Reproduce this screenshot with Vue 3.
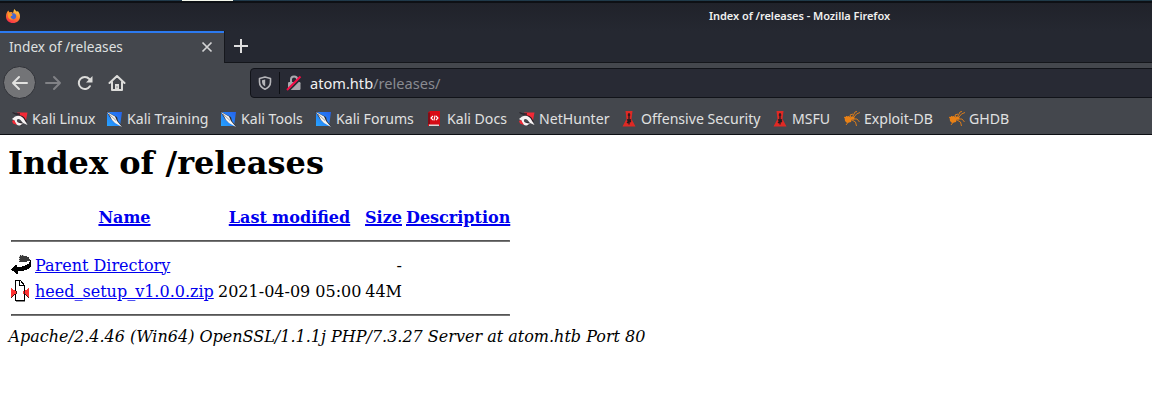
<script setup>
const bookmarks = [
  { label: 'Kali Linux', icon: 'dragon', w: 95 },
  { label: 'Kali Training', icon: 'knife', w: 114 },
  { label: 'Kali Tools', icon: 'knife', w: 95 },
  { label: 'Kali Forums', icon: 'knife', w: 111 },
  { label: 'Kali Docs', icon: 'book', w: 92 },
  { label: 'NetHunter', icon: 'dragon', w: 102 },
  { label: 'Offensive Security', icon: 'offsec', w: 151 },
  { label: 'MSFU', icon: 'offsec', w: 72 },
  { label: 'Exploit-DB', icon: 'bug', w: 105 },
  { label: 'GHDB', icon: 'bug', w: 70 },
]
</script>

<template>
  <div class="window">
    <div class="desktop"><i></i></div>
    <header class="titlebar">
      <svg class="fox" width="16" height="16" viewBox="0 0 16 16">
        <defs>
          <linearGradient id="fx" x1="0.8" y1="0" x2="0.3" y2="1">
            <stop offset="0" stop-color="#ffd84a" /><stop offset=".45" stop-color="#ff8a2a" /><stop offset="1" stop-color="#f52b4b" />
          </linearGradient>
        </defs>
        <path d="M1 8.5C1 6 1.8 4 3.3 2.5L4.3 4.3L6.5 4L8 5L9.2 1L11.5 3.6L13 3.2C14.4 4.8 15 6.5 15 8.5C15 12.4 12 15 8 15S1 12.400 1 8.500Z" fill="url(#fx)" />
        <path d="M5.300 5.700L8 5.200C10 5 11.500 6.500 11.200 8.500C11 10.500 9.500 11.500 7.700 11.200C6 11 5 9.500 5.600 8L7.600 7.500Z" fill="#4668ce" />
        <path d="M3 5.500L5.500 5L7.800 6.900L5.600 8.200C5 9.500 6.300 11 8.300 10.900C6 12.500 3 11 3 8Z" fill="#ff9b27" />
      </svg>
      <span class="window-title">Index of /releases - Mozilla Firefox</span>
    </header>

    <div class="tabs">
      <div class="tab">
        <span>Index of /releases</span>
        <svg width="12" height="12" viewBox="0 0 12 12"><path d="M1.500 1.500L10.500 10.500M10.500 1.500L1.500 10.500" stroke="#d2d3d4" stroke-width="1.700" /></svg>
      </div>
      <svg class="plus" width="14" height="14" viewBox="0 0 14 14"><path d="M7 0V14M0 7H14" stroke="#dedede" stroke-width="2" /></svg>
    </div>

    <nav class="toolbar">
      <div class="back">
        <svg width="18" height="16" viewBox="0 0 18 16"><path d="M16 8H2M8 2L2 8L8 14" fill="none" stroke="#e2e2e0" stroke-width="2" stroke-linecap="round" stroke-linejoin="round" /></svg>
      </div>
      <svg class="forward" width="18" height="16" viewBox="0 0 18 16"><path d="M2 8H16M10 2L16 8L10 14" fill="none" stroke="#818286" stroke-width="2" stroke-linecap="round" stroke-linejoin="round" /></svg>
      <svg class="reload" width="16" height="16" viewBox="0 0 16 16"><path d="M12.900 11.200A6 6 0 1 1 12.300 4" fill="none" stroke="#dcdcda" stroke-width="2" stroke-linecap="round" /><path d="M15.500 1V7.500H9Z" fill="#dcdcda" /></svg>
      <svg class="home" width="18" height="16" viewBox="0 0 18 16"><path d="M1.500 8L9 1L16.500 8M4 7V15H14V7" fill="none" stroke="#dcdcda" stroke-width="2" stroke-linecap="round" stroke-linejoin="round" /><path d="M7 15V9H11V15Z" fill="#dcdcda" /><path d="M8.500 12H9.500" stroke="#42454b" /></svg>
      <div class="address">
        <svg class="shield" width="14" height="14" viewBox="0 0 14 14"><path d="M7 1L12.500 2.500V6C12.500 9.500 10.300 11.800 7 13.200C3.700 11.800 1.500 9.500 1.500 6V2.500Z" fill="none" stroke="#b5b5b9" stroke-width="1.600" stroke-linejoin="round" /><path d="M7.200 3.500V10.600C5 9.300 4 7.700 4 5.500V4.200Z" fill="#b5b5b9" /></svg>
        <i class="divider"></i>
        <svg class="lock" width="16" height="16" viewBox="0 0 16 16"><path d="M5 7V4.500A3.100 3.100 0 0 1 11.200 4.500V7" fill="none" stroke="#a9a9ae" stroke-width="2" /><rect x="2" y="7" width="12.500" height="8" rx="1.200" fill="#a9a9ae" /><path d="M2.300 16L16 2.300" stroke="#292b34" stroke-width="2" /><path d="M1 15L14.500 1.500" stroke="#f50b45" stroke-width="2" /></svg>
        <span class="url"><b>atom.htb</b>/releases/</span>
      </div>
    </nav>

    <div class="bookmarks">
      <div v-for="b in bookmarks" :key="b.label" class="bookmark" :style="{ width: b.w + 'px' }">
        <svg v-if="b.icon === 'dragon'" width="16" height="16" viewBox="0 0 16 16">
          <path d="M5 1.500H15.500L13.500 12Z" fill="#f42936" />
          <path d="M.5 1.500L4 3L8 3" fill="none" stroke="#28212a" stroke-width="1.300" />
          <path d="M2.500 8C5 5 9.500 5 11.500 8L13.500 11.500M4 10C4 12 7 13 10 13" fill="none" stroke="#281d25" stroke-width="3.200" />
          <path d="M0 8L3 5.500C7 3.500 11 5.500 12.500 9L15.500 14L11 12L8.500 9C6.500 7 4.500 8 5 10C5.500 12 8 12 11 12.500L8 14.500C5 14.500 2.500 12.500 2.500 9.500Z" fill="#f5f1f2" />
          <path d="M0 10L2 9L5 14L1 12.500Z" fill="#f42936" />
        </svg>
        <svg v-else-if="b.icon === 'knife'" class="knife" width="16" height="16" viewBox="0 0 16 16">
          <defs><linearGradient id="kb" x1="1" y1="0" x2="0" y2="1"><stop stop-color="#2561ed" /><stop offset="1" stop-color="#27a4ff" /></linearGradient></defs>
          <path d="M1 1H16L14 15H1Z" fill="url(#kb)" />
          <path d="M0 0L5 3L11 6L12 10L16 15L8 11L5 8Z" fill="#302d32" />
          <path d="M1 1L9 5.500L11 10L16 16L9 12L6 9L4 5Z" fill="#f6f5f4" />
          <path d="M3 3L10 9.500" stroke="#77777c" stroke-width=".7" />
        </svg>
        <svg v-else-if="b.icon === 'book'" class="book" width="16" height="16" viewBox="0 0 16 16">
          <path d="M2 1.500L4 0H14V15H2Z" fill="#d70b15" /><path d="M2 1.500H4V13H2Z" fill="#850c16" /><path d="M3 13.500H13V15H3Z" fill="#ded7d7" />
          <path d="M7 5L5 7L7 9M10 5L12 7L10 9M9 4.500L8 9.500" fill="none" stroke="#fff" stroke-width="1.100" />
        </svg>
        <svg v-else-if="b.icon === 'offsec'" width="16" height="16" viewBox="0 0 16 16">
          <path d="M4.500 0H11.500L10.500 8L14.500 15.500H1.500L5.500 8Z" fill="#df2924" />
          <path d="M8 2V13.500M6.800 4H9.200M6 8.500L10 11M10 8.500L6 12" fill="none" stroke="#211c20" stroke-width="1.300" /><circle cx="8" cy="9.800" r="1.600" fill="#211c20" />
        </svg>
        <svg v-else width="16" height="16" viewBox="0 0 16 16">
          <path d="M.5 6L5 5L8 8L7 11L3 12L1 10Z" fill="#e98116" /><ellipse cx="8.600" cy="7" rx="2" ry="1.700" fill="#e98116" />
          <path d="M0 6L4 9M7 7L6 4L9 3M9 5L11 1L13 .5M10 6L12.500 3L16 1.500M9 8L13 8L15.500 11M8 9L11.500 11L12.500 15M5 10L2 14M4 7L2 5" fill="none" stroke="#e98116" stroke-width=".9" />
        </svg>
        <span>{{ b.label }}</span>
      </div>
    </div>

    <main class="page">
      <h1>Index of /releases</h1>
      <table>
        <tbody>
          <tr class="head"><th class="ic"></th><th class="name"><a>Name</a></th><th class="date"><a>Last modified</a></th><th class="size"><a>Size</a></th><th class="desc"><a>Description</a></th></tr>
          <tr class="rule"><th colspan="5"><hr /></th></tr>
          <tr class="row">
            <td><svg width="20" height="22" viewBox="0 0 20 22" shape-rendering="crispEdges">
              <path d="M9 1H13V2H16V3H18V5H19V7H16V8H8V2H9Z" fill="#3a3a3a" /><path d="M8 2.500H9M8 4.500H9M8 6.500H9M10 1.500H11M12 1.500H13" stroke="#ccc" />
              <path d="M0 15H1V14H2V13H3V12H4V11H6V13H11V12H14V11H16V10H18V8H19V6H20V13H19V14H18V15H16V16H13V17H7V20H5V19H4V18H3V17H1V16H0Z" fill="#000" />
            </svg></td>
            <td><a>Parent Directory</a></td><td></td><td class="right">-</td><td></td>
          </tr>
          <tr class="row">
            <td><svg width="20" height="22" viewBox="0 0 20 22" shape-rendering="crispEdges">
              <path d="M4.500 .5H9.500L13.500 5.500V20.500H4.500Z" fill="#fff" stroke="#000" /><path d="M8.500 .5V5.500H13.500" fill="none" stroke="#000" /><path d="M5 21.500H14" fill="none" stroke="#888" />
              <path d="M0 8H1V9H2V10H4V11H6V14H4V15H3V16H2V17H1V18H0ZM18 8H17V9H16V10H14V11H12V14H14V15H15V16H16V17H17V18H18Z" fill="#ff3333" />
              <path d="M0 17.500H1M1 16.500H2M2 15.500H3M3 14.500H4M17 17.500H18M16 16.500H17M15 15.500H16M14 14.500H15M5 11V14M13 11V14" fill="none" stroke="#501818" />
            </svg></td>
            <td><a>heed_setup_v1.0.0.zip</a></td><td class="right">2021-04-09 05:00</td><td class="right">44M</td><td></td>
          </tr>
          <tr class="rule last"><th colspan="5"><hr /></th></tr>
        </tbody>
      </table>
      <address>Apache/2.4.46 (Win64) OpenSSL/1.1.1j PHP/7.3.27 Server at atom.htb Port 80</address>
    </main>
  </div>
</template>

<style scoped>
.window { width: 1152px; height: 416px; overflow: hidden; background: #fff; font-family: "Noto Sans", sans-serif; }
.window svg { flex: none; display: block; }
.desktop { box-sizing: border-box; height: 3px; background: linear-gradient(90deg, #20394b, #203b49); border-bottom: 2px solid #0d1015; padding-left: 182px; }
.desktop i { display: block; width: 51px; height: 1px; background: #f4f7ec; }
.titlebar { box-sizing: border-box; height: 28px; display: grid; grid-template-columns: 709px 1fr; background: linear-gradient(#20222a, #252831); }
.fox { margin: 5px 0 0 5px; }
.window-title { color: #f0f0ef; font-size: 11px; font-weight: 600; letter-spacing: -.04px; line-height: 26px; white-space: nowrap; }
.tabs { box-sizing: border-box; height: 32px; display: flex; background: #252831; border-bottom: 1px solid #14161b; }
.tab { box-sizing: border-box; width: 224px; height: 32px; border-top: 2px solid #2c7af0; background: #44474d; display: flex; align-items: center; justify-content: space-between; padding: 0 11px 0 9px; color: #dfe0e0; font-size: 13.650px; box-shadow: 1px 0 #16181d; }
.tab span { padding-bottom: 3px; }
.tab svg { margin-bottom: 2px; }
.plus { margin: 8px 0 0 10px; }
.toolbar { height: 39px; background: #44474d; display: flex; align-items: center; }
.back { box-sizing: border-box; width: 33px; height: 33px; margin-left: 3px; border-radius: 50%; background: #737477; border: 1px solid #303238; display: grid; place-items: center; }
.forward { margin-left: 8px; }
.reload { margin-left: 15px; }
.home { margin-left: 15px; }
.address { box-sizing: border-box; flex: 1; height: 30px; margin-left: 124px; margin-right: -5px; border: 1px solid #111319; border-radius: 4px; background: #282a34; display: flex; align-items: center; font-size: 14.600px; color: #898b91; }
.shield { margin-left: 7px; }
.divider { width: 1px; height: 22px; margin: 0 6px 0 7px; background: #0d0f14; }
.url { margin-left: 8px; white-space: pre; }
.url b { font-weight: 400; color: #f0f0f1; }
.bookmarks { box-sizing: border-box; height: 33px; background: #44474d; border-bottom: 1px solid #0d0f13; padding-left: 12px; display: flex; align-items: center; }
.bookmark { flex: none; display: flex; align-items: center; gap: 4px; color: #e0e1e1; font-size: 14.100px; line-height: 20px; white-space: nowrap; }
.bookmark span { padding-top: 2px; }
.bookmark svg { margin-top: 1px; }
.bookmark .knife { margin: 1px 1px 0 -1px; }
.bookmark .book { margin: 1px 1px 0 -1px; }
.page { padding: 9px 8px 8px; color: #000; font: 16px/19px "DejaVu Serif", serif; }
.page h1 { margin: 0; font-size: 32px; line-height: 38px; }
table { margin-top: 20px; border-spacing: 2px; border-collapse: separate; table-layout: fixed; width: 503px; }
th, td { padding: 1px; white-space: nowrap; text-align: left; }
th { text-align: center; }
.ic { width: 20px; }
.name { width: 179px; }
.date { width: 143px; }
.size { width: 37px; }
.desc { width: 104px; }
.head { height: 27px; }
.row { height: 24px; }
.row td { height: 22px; }
.right { text-align: right; }
a { color: #0000ee; text-decoration: underline; }
th a { text-decoration-thickness: 2px; }
.rule th { height: 16px; }
hr { margin: 6px 0 8px; height: 0; border: 1px solid; border-color: #555 #777 #777 #555; }
.last hr { margin: 8px 0; }
address { font-style: italic; white-space: nowrap; padding: 0 0 0 .5px; }
</style>
